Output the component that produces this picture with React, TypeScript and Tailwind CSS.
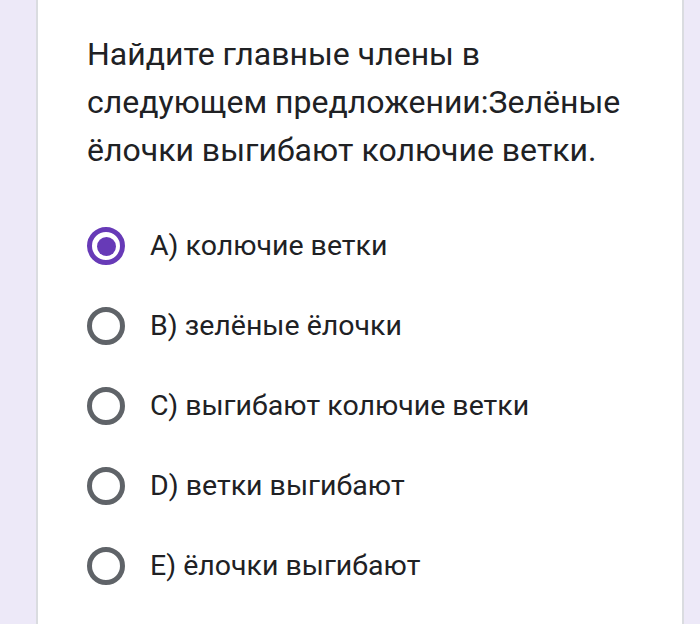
import { useState } from 'react'

const OPTIONS = [
  'A) колючие ветки',
  'B) зелёные ёлочки',
  'C) выгибают колючие ветки',
  'D) ветки выгибают',
  'E) ёлочки выгибают',
]

function Radio({ checked }: { checked: boolean }) {
  return (
    <span
      className={[
        'flex h-[38px] w-[38px] shrink-0 items-center justify-center rounded-full border-[5px]',
        checked ? 'border-[#673ab7]' : 'border-[#5f6368]',
      ].join(' ')}
    >
      {checked && <span className="h-[19px] w-[19px] rounded-full bg-[#673ab7]" />}
    </span>
  )
}

export default function App() {
  const [selected, setSelected] = useState(0)

  return (
    <div className="flex h-[624px] w-[700px] bg-[#ede9f8] font-['Roboto',sans-serif] text-[#202124]">
      <div className="ml-[36px] mr-[16px] flex-1 border-x-2 border-[#dadce0] bg-white pl-[49px] pt-[30px]">
        <h1 className="max-w-[560px] text-[32px] leading-[48px] font-normal">
          Найдите главные члены в следующем предложении:Зелёные ёлочки выгибают колючие ветки.
        </h1>
        <ul className="mt-[32px] flex flex-col">
          {OPTIONS.map((opt, i) => (
            <li
              key={opt}
              className="flex h-[80px] cursor-pointer items-center gap-[25px]"
              onClick={() => setSelected(i)}
            >
              <Radio checked={selected === i} />
              <span className="text-[28.5px]">{opt}</span>
            </li>
          ))}
        </ul>
      </div>
    </div>
  )
}
